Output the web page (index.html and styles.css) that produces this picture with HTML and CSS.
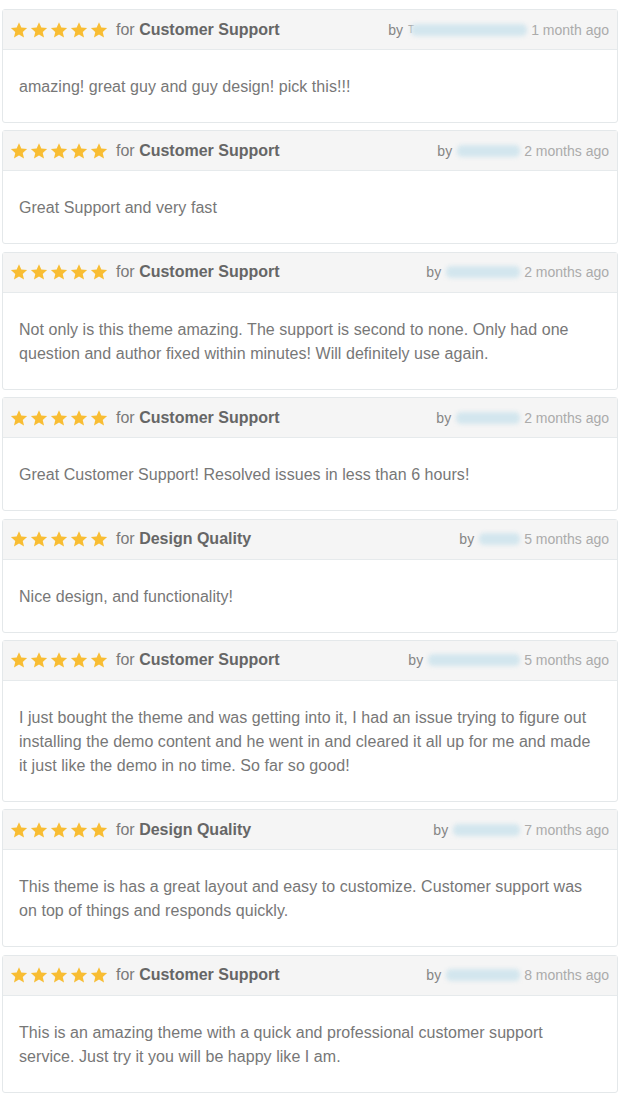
FILE: index.html
```html
<!DOCTYPE html>
<html>
<head>
<meta charset="utf-8">
<link rel="stylesheet" href="styles.css">
</head>
<body>
<svg width="0" height="0" class="defs">
  <defs>
    <symbol id="star" viewBox="0 0 24 24">
      <path d="M12 1.6l3.1 7.1 7.7.7-5.8 5.1 1.7 7.6L12 18.1l-6.7 4 1.7-7.6-5.8-5.1 7.7-.7z"/>
    </symbol>
  </defs>
</svg>
<div class="list">
  <div class="review">
    <div class="head">
      <div class="rating"><span class="stars"><svg><use href="#star"/></svg><svg><use href="#star"/></svg><svg><use href="#star"/></svg><svg><use href="#star"/></svg><svg><use href="#star"/></svg></span><span class="for">for <b>Customer Support</b></span></div>
      <div class="meta"><span class="by">by</span><span class="tick">T</span><span class="name" style="width:116px"></span><span class="ago">1 month ago</span></div>
    </div>
    <div class="body">amazing! great guy and guy design! pick this!!!</div>
  </div>
  <div class="review">
    <div class="head">
      <div class="rating"><span class="stars"><svg><use href="#star"/></svg><svg><use href="#star"/></svg><svg><use href="#star"/></svg><svg><use href="#star"/></svg><svg><use href="#star"/></svg></span><span class="for">for <b>Customer Support</b></span></div>
      <div class="meta"><span class="by">by</span><span class="name" style="width:63px"></span><span class="ago">2 months ago</span></div>
    </div>
    <div class="body">Great Support and very fast</div>
  </div>
  <div class="review">
    <div class="head">
      <div class="rating"><span class="stars"><svg><use href="#star"/></svg><svg><use href="#star"/></svg><svg><use href="#star"/></svg><svg><use href="#star"/></svg><svg><use href="#star"/></svg></span><span class="for">for <b>Customer Support</b></span></div>
      <div class="meta"><span class="by">by</span><span class="name" style="width:74px"></span><span class="ago">2 months ago</span></div>
    </div>
    <div class="body">Not only is this theme amazing. The support is second to none. Only had one question and author fixed within minutes! Will definitely use again.</div>
  </div>
  <div class="review">
    <div class="head">
      <div class="rating"><span class="stars"><svg><use href="#star"/></svg><svg><use href="#star"/></svg><svg><use href="#star"/></svg><svg><use href="#star"/></svg><svg><use href="#star"/></svg></span><span class="for">for <b>Customer Support</b></span></div>
      <div class="meta"><span class="by">by</span><span class="name" style="width:64px"></span><span class="ago">2 months ago</span></div>
    </div>
    <div class="body">Great Customer Support! Resolved issues in less than 6 hours!</div>
  </div>
  <div class="review">
    <div class="head">
      <div class="rating"><span class="stars"><svg><use href="#star"/></svg><svg><use href="#star"/></svg><svg><use href="#star"/></svg><svg><use href="#star"/></svg><svg><use href="#star"/></svg></span><span class="for">for <b>Design Quality</b></span></div>
      <div class="meta"><span class="by">by</span><span class="name" style="width:41px"></span><span class="ago">5 months ago</span></div>
    </div>
    <div class="body">Nice design, and functionality!</div>
  </div>
  <div class="review">
    <div class="head">
      <div class="rating"><span class="stars"><svg><use href="#star"/></svg><svg><use href="#star"/></svg><svg><use href="#star"/></svg><svg><use href="#star"/></svg><svg><use href="#star"/></svg></span><span class="for">for <b>Customer Support</b></span></div>
      <div class="meta"><span class="by">by</span><span class="name" style="width:92px"></span><span class="ago">5 months ago</span></div>
    </div>
    <div class="body">I just bought the theme and was getting into it, I had an issue trying to figure out installing the demo content and he went in and cleared it all up for me and made it just like the demo in no time. So far so good!</div>
  </div>
  <div class="review">
    <div class="head">
      <div class="rating"><span class="stars"><svg><use href="#star"/></svg><svg><use href="#star"/></svg><svg><use href="#star"/></svg><svg><use href="#star"/></svg><svg><use href="#star"/></svg></span><span class="for">for <b>Design Quality</b></span></div>
      <div class="meta"><span class="by">by</span><span class="name" style="width:67px"></span><span class="ago">7 months ago</span></div>
    </div>
    <div class="body">This theme is has a great layout and easy to customize. Customer support was on top of things and responds quickly.</div>
  </div>
  <div class="review">
    <div class="head">
      <div class="rating"><span class="stars"><svg><use href="#star"/></svg><svg><use href="#star"/></svg><svg><use href="#star"/></svg><svg><use href="#star"/></svg><svg><use href="#star"/></svg></span><span class="for">for <b>Customer Support</b></span></div>
      <div class="meta"><span class="by">by</span><span class="name" style="width:74px"></span><span class="ago">8 months ago</span></div>
    </div>
    <div class="body">This is an amazing theme with a quick and professional customer support service. Just try it you will be happy like I am.</div>
  </div>
</div>
</body>
</html>
```
FILE: styles.css
```css
html, body {
  margin: 0;
  padding: 0;
  background: #fff;
}
body {
  font-family: "Liberation Sans", Arial, Helvetica, sans-serif;
  color: #777;
}
.defs {
  position: absolute;
  width: 0;
  height: 0;
}
.list {
  display: flex;
  flex-direction: column;
  gap: 7.4px;
  padding: 9px 4px 0 2px;
}
.review {
  border: 1px solid #e4e8ea;
  border-radius: 3px;
  background: #fff;
}
.head {
  height: 39px;
  display: flex;
  align-items: center;
  justify-content: space-between;
  padding: 0 8px 0 7px;
  background: #f5f5f5;
  border-bottom: 1px solid #e6eaec;
}
.rating {
  display: flex;
  align-items: center;
}
.stars {
  display: flex;
  gap: 2px;
  margin-right: 8px;
}
.stars svg {
  width: 18px;
  height: 18px;
  fill: #f8bd33;
  display: block;
}
.for {
  font-size: 16px;
  color: #7a7a7a;
}
.for b {
  color: #666;
  font-weight: bold;
}
.meta {
  display: flex;
  align-items: center;
  font-size: 14px;
}
.by {
  color: #858585;
  margin-right: 5px;
}
.tick {
  color: #999;
  font-size: 10px;
  margin-right: -3px;
}
.name {
  display: inline-block;
  height: 12px;
  background: #d3e6ee;
  border-radius: 5px;
  filter: blur(2px);
  margin-right: 4px;
}
.ago {
  color: #ababab;
}
.body {
  padding: 25px 20px 23px 16px;
  font-size: 16px;
  line-height: 24px;
  letter-spacing: 0.05px;
  color: #777;
}
```
